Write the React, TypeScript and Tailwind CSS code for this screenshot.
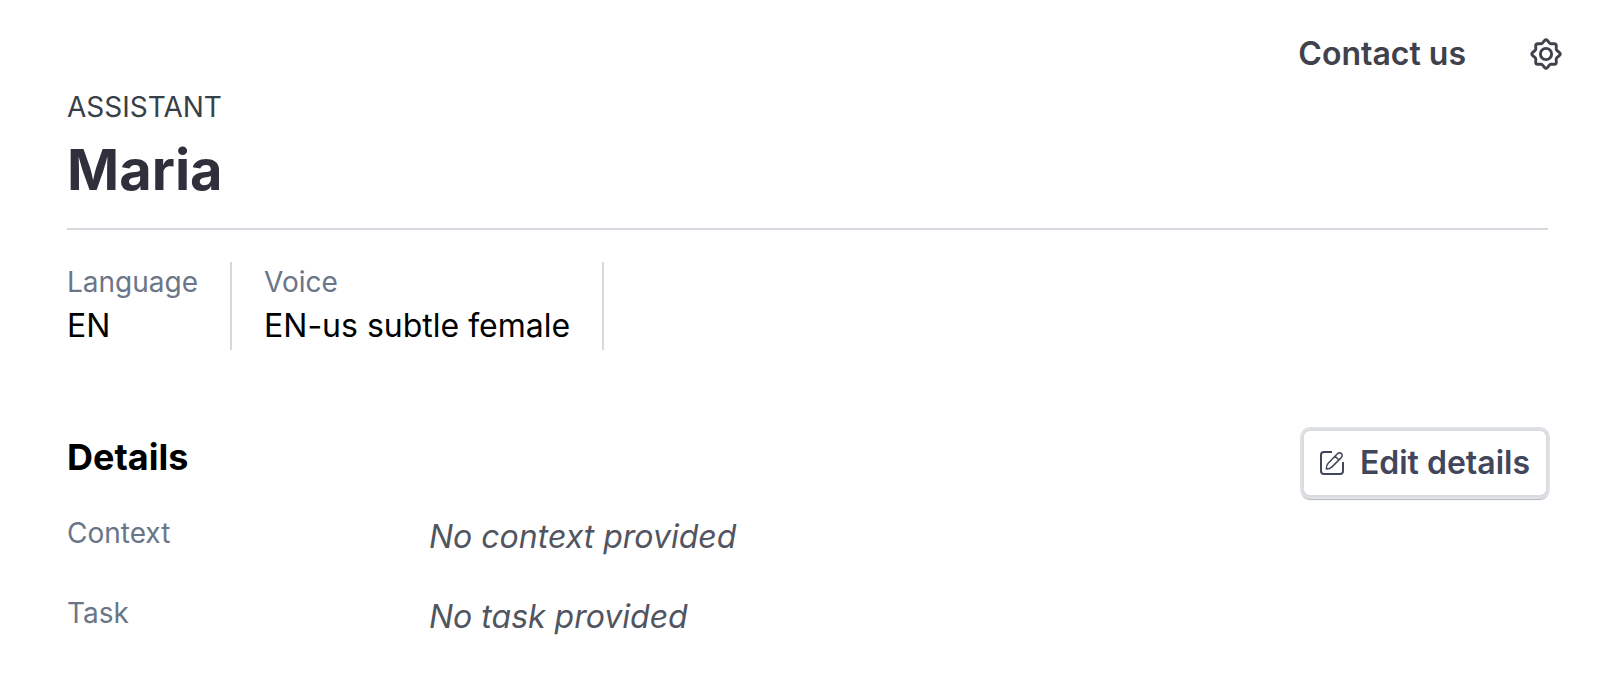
import { ReactNode } from "react";

function Fact({ label, value }: { label: string; value: string }) {
  return (
    <div className="border-r-2 border-[#d5d9de] pr-8">
      <dt className="text-[28px] leading-10 text-[#6b7588]">{label}</dt>
      <dd className="text-[32px] leading-12 text-black">{value}</dd>
    </div>
  );
}

function Detail({ label, children }: { label: string; children: ReactNode }) {
  return (
    <div className="grid grid-cols-[362px_1fr]">
      <dt className="text-[28px] leading-10 text-[#6b7588]">{label}</dt>
      <dd className="text-[32px] leading-12 text-[#52555f] italic">{children}</dd>
    </div>
  );
}

function GearIcon() {
  return (
    <svg className="size-8" viewBox="0 0 32 32" fill="none" stroke="currentColor" strokeWidth="2.9" strokeLinecap="round" strokeLinejoin="round" aria-hidden="true">
      <path d="M14.6 2.5Q16 1.1 17.4 2.5L19.6 5.1Q20.3 5.9 21.4 5.8L24.2 5.7Q26.3 5.7 26.3 7.8L26.2 10.6Q26.1 11.7 26.9 12.4L29.5 14.6Q30.9 16 29.5 17.4L26.9 19.6Q26.1 20.3 26.2 21.4L26.3 24.2Q26.3 26.3 24.2 26.3L21.4 26.2Q20.3 26.1 19.6 26.9L17.4 29.5Q16 30.9 14.6 29.5L12.4 26.9Q11.7 26.1 10.6 26.2L7.8 26.3Q5.7 26.3 5.7 24.2L5.8 21.4Q5.9 20.3 5.1 19.6L2.5 17.4Q1.1 16 2.5 14.6L5.1 12.4Q5.9 11.7 5.8 10.6L5.7 7.8Q5.7 5.7 7.8 5.7L10.6 5.8Q11.7 5.9 12.4 5.1Z" />
      <circle cx="16" cy="16" r="5.6" />
    </svg>
  );
}

function EditIcon() {
  return (
    <svg className="size-6" viewBox="0 0 24 24" fill="none" stroke="currentColor" strokeWidth="2" strokeLinejoin="round" aria-hidden="true">
      <path d="M12 1H4a3 3 0 0 0-3 3v16a3 3 0 0 0 3 3h16a3 3 0 0 0 3-3v-9" />
      <path strokeWidth="1.5" d="M6.300 18c0-2.400.4-4.200 1.900-5.700L17.400 2.800c1.300-1.300 2.900-1.300 4-.2s1.100 2.700-.2 4L12 15.900c-1.500 1.500-3.200 2.100-5.700 2.100ZM15.100 5.200l3.900 3.800" />
    </svg>
  );
}

export default function App() {
  return (
    <main className="bg-white pt-8 pr-18 pl-[67px] font-['Inter',sans-serif]">
      <nav className="-mr-3.5 flex items-center justify-end gap-16 text-[#3f414c]">
        <a href="#contact" className="text-[32px] leading-11 font-semibold">Contact us</a>
        <button type="button" aria-label="Settings"><GearIcon /></button>
      </nav>
      <header className="border-b-2 border-[#d5d9de] pt-[11px] pb-[26px]">
        <p className="text-[28px] leading-10 text-[#374048]">ASSISTANT</p>
        <h1 className="mt-[11px] text-[56px] leading-16 font-bold text-[#30303d]">Maria</h1>
      </header>
      <dl className="mt-8 flex gap-8">
        <Fact label="Language" value="EN" />
        <Fact label="Voice" value="EN-us subtle female" />
      </dl>
      <section className="mt-[79px]">
        <div className="flex items-start justify-between">
          <h2 className="pt-1 text-[36px] leading-12 font-bold text-black">Details</h2>
          <button type="button" className="flex items-center gap-4 rounded-lg border-2 border-[#d8dce0] px-4 py-2 text-[32px] leading-12 font-semibold text-[#42465a] shadow-[0_0_0_2px_#dfe1e4,0_2px_1px_1px_#b4b8be]">
            <EditIcon />
            Edit details
          </button>
        </div>
        <dl className="mt-4 flex flex-col gap-8">
          <Detail label="Context">No context provided</Detail>
          <Detail label="Task">No task provided</Detail>
        </dl>
      </section>
    </main>
  );
}
